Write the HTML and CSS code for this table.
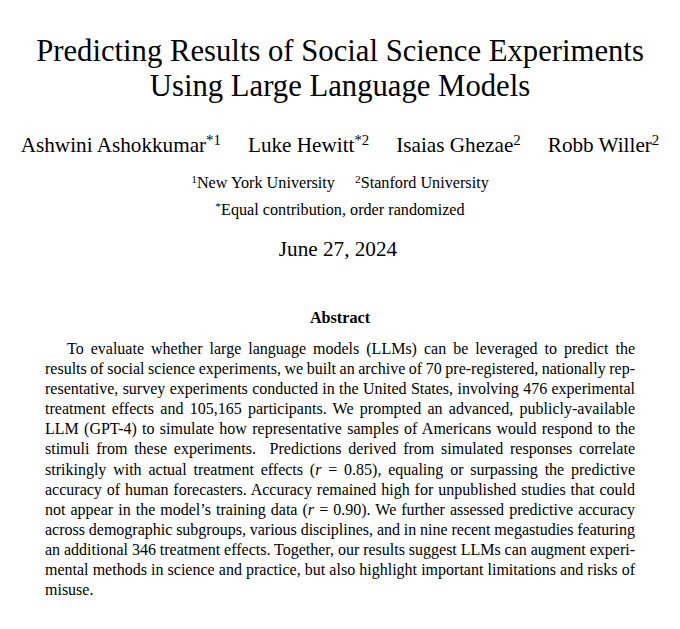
FILE: index.html
```html
<!DOCTYPE html>
<html>
<head>
<meta charset="utf-8">
<link rel="stylesheet" href="styles.css">
</head>
<body>
<main class="paper">
  <h1 class="title">Predicting Results of Social Science Experiments<br>Using Large Language Models</h1>
  <div class="authors">
    <span class="author">Ashwini Ashokkumar<sup>*1</sup></span>
    <span class="author">Luke Hewitt<sup>*2</sup></span>
    <span class="author">Isaias Ghezae<sup>2</sup></span>
    <span class="author">Robb Willer<sup>2</sup></span>
  </div>
  <div class="affils">
    <span><sup>1</sup>New York University</span>
    <span><sup>2</sup>Stanford University</span>
  </div>
  <div class="note"><sup>*</sup>Equal contribution, order randomized</div>
  <div class="date">June 27, 2024</div>
  <section class="abstract">
    <h2 class="abstract-head">Abstract</h2>
    <p class="abstract-text">To evaluate whether large language models (LLMs) can be leveraged to predict the<br>results of social science experiments, we built an archive of 70 pre-registered, nationally rep-<br>resentative, survey experiments conducted in the United States, involving 476 experimental<br>treatment effects and 105,165 participants. We prompted an advanced, publicly-available<br>LLM (GPT-4) to simulate how representative samples of Americans would respond to the<br>stimuli from these experiments.&nbsp; Predictions derived from simulated responses correlate<br>strikingly with actual treatment effects (<i>r</i> = 0.85), equaling or surpassing the predictive<br>accuracy of human forecasters. Accuracy remained high for unpublished studies that could<br>not appear in the model’s training data (<i>r</i> = 0.90). We further assessed predictive accuracy<br>across demographic subgroups, various disciplines, and in nine recent megastudies featuring<br>an additional 346 treatment effects. Together, our results suggest LLMs can augment experi-<br>mental methods in science and practice, but also highlight important limitations and risks of<br>misuse.</p>
  </section>
</main>
</body>
</html>
```
FILE: styles.css
```css
html, body {
  margin: 0;
  padding: 0;
  background: #fff;
}
body {
  font-family: "Liberation Serif", "Times New Roman", serif;
  color: #000;
}
.paper {
  width: 680px;
  padding-top: 34px;
  display: flex;
  flex-direction: column;
  align-items: center;
}
.title {
  margin: 0;
  font-weight: normal;
  font-size: 30.7px;
  line-height: 35px;
  text-align: center;
  white-space: nowrap;
}
.authors {
  margin-top: 29px;
  display: flex;
  gap: 27px;
  font-size: 21.2px;
  line-height: 24px;
  white-space: nowrap;
}
sup {
  font-size: 0.7em;
  line-height: 0;
  vertical-align: 0.45em;
}
.affils {
  margin-top: 17px;
  display: flex;
  gap: 20px;
  font-size: 16.2px;
  line-height: 18px;
}
.note {
  margin-top: 9px;
  font-size: 16.2px;
  line-height: 18px;
}
.date {
  margin-top: 18px;
  margin-right: 4px;
  font-size: 21.2px;
  line-height: 24px;
}
.abstract {
  margin-top: 47px;
  width: 590px;
  display: flex;
  flex-direction: column;
  align-items: center;
}
.abstract-head {
  margin: 0;
  font-size: 16.2px;
  line-height: 20px;
  font-weight: bold;
}
.abstract-text {
  margin: 11px 0 0;
  font-size: 16px;
  line-height: 20.1px;
  word-spacing: -1.5px;
  text-align: justify;
  text-align-last: justify;
  text-indent: 22px;
  width: 590px;
}
.abstract-text i {
  font-style: italic;
}
```
